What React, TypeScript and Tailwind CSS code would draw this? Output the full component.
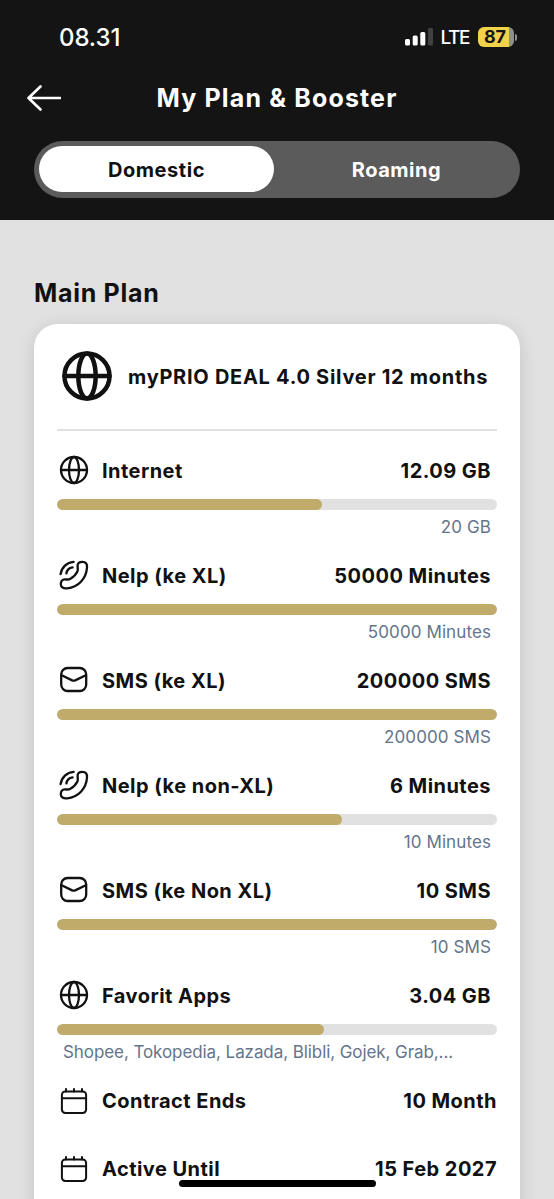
import type { ReactNode } from "react";

type IconName = "globe" | "call" | "mail" | "calendar";

interface Quota {
  icon: IconName;
  label: string;
  value: string;
  total?: string;
  apps?: string;
  pct: number;
}

const QUOTAS: Quota[] = [
  { icon: "globe", label: "Internet", value: "12.09 GB", total: "20 GB", pct: 60.3 },
  { icon: "call", label: "Nelp (ke XL)", value: "50000 Minutes", total: "50000 Minutes", pct: 100 },
  { icon: "mail", label: "SMS (ke XL)", value: "200000 SMS", total: "200000 SMS", pct: 100 },
  { icon: "call", label: "Nelp (ke non-XL)", value: "6 Minutes", total: "10 Minutes", pct: 64.8 },
  { icon: "mail", label: "SMS (ke Non XL)", value: "10 SMS", total: "10 SMS", pct: 100 },
  {
    icon: "globe",
    label: "Favorit Apps",
    value: "3.04 GB",
    apps: "Shopee, Tokopedia, Lazada, Blibli, Gojek, Grab,...",
    pct: 60.7,
  },
];

const DATES = [
  { label: "Contract Ends", value: "10 Month" },
  { label: "Active Until", value: "15 Feb 2027" },
];

const ICON_PATHS: Record<IconName, ReactNode> = {
  globe: (
    <>
      <circle cx="15" cy="15" r="13" />
      <ellipse cx="15" cy="15" rx="5" ry="13" />
      <path d="M2 15h26" />
    </>
  ),
  call: (
    <>
      <path d="M18.6 6.6C18.2 3.2 20.4 1.8 23.4 1.8C26.8 1.8 28.3 3.8 28 7.6C27.2 18.6 19.2 27.4 8.2 28.3C4.2 28.7 1.9 27.4 1.8 24.2C1.7 21.2 3.2 19.4 5.8 19.4C8 19.4 9.4 20 11.4 18.8C14.4 17.2 17 14.6 18.4 11.6C19.2 9.8 18.8 8.4 18.6 6.6Z" />
      <path d="M1.6 14.2C2.6 7.4 7.8 2.4 14.6 1.8" />
      <path d="M7.4 13.4C7.8 10.4 10.2 8 13.6 7.4" />
    </>
  ),
  mail: (
    <>
      <rect x="2.2" y="3" width="25" height="23" rx="6.4" />
      <path d="M2.6 10.2L13.2 15.4Q14.7 16 16.2 15.4L26.8 10.2" />
    </>
  ),
  calendar: (
    <>
      <rect x="2.9" y="5.4" width="24.2" height="21.6" rx="3.4" />
      <path d="M2.9 12.2h24.2M7 3V5.4M15 3V5.4M23 3V5.4" />
    </>
  ),
};

function Icon({ name, className, stroke = 2.3 }: { name: IconName; className: string; stroke?: number }) {
  return (
    <svg viewBox="0 0 30 30" fill="none" stroke="#111" strokeWidth={stroke} strokeLinecap="round" strokeLinejoin="round" className={className}>
      {ICON_PATHS[name]}
    </svg>
  );
}

function StatusBar() {
  return (
    <div className="flex h-[74px] items-center justify-between pr-[37px] pl-[59px]">
      <span className="pt-[2px] text-[24px] leading-none font-medium tracking-[-0.1px]">08.31</span>
      <div className="flex items-center">
        <svg viewBox="0 0 28 18" className="h-[18px] w-7" fill="#fff">
          <rect x="0" y="11" width="5" height="6.5" rx="1.5" />
          <rect x="7.7" y="7.5" width="5" height="10" rx="1.5" />
          <rect x="15.3" y="4" width="5" height="13.5" rx="1.5" />
          <rect x="23" y="0" width="5" height="17.5" rx="1.5" fill="#414141" />
        </svg>
        <span className="ml-[7px] pt-px text-[19px] leading-none font-medium tracking-[-1.4px]">LTE</span>
        <div className="ml-[9px] flex items-center">
          <div className="flex h-5 w-9 items-center justify-center rounded-[6px] bg-linear-to-r from-[#f3d24b] from-86% to-[#8e8e8e] to-86% pr-[2px] text-[18px] leading-none font-bold text-[#141414]">
            87
          </div>
          <div className="ml-px h-[7px] w-[2px] rounded-r-full bg-[#8e8e8e]" />
        </div>
      </div>
    </div>
  );
}

function QuotaRow({ icon, label, value, total, apps, pct }: Quota) {
  return (
    <div className="h-[105px]">
      <div className="flex h-[42px] items-center justify-between pr-[6px]">
        <div className="flex items-center gap-[13px] pl-[2px]">
          <Icon name={icon} className="mb-[2px] size-[30px]" />
          <span>{label}</span>
        </div>
        <span>{value}</span>
      </div>
      <div className="mt-[7px] h-[11px] overflow-hidden rounded-full bg-[#e1e1e1]">
        <div className="h-full rounded-full bg-[#c1ab6b]" style={{ width: `${pct}%` }} />
      </div>
      <div className="flex h-[35px] items-center px-[6px] text-[17px] font-normal tracking-[0.1px] text-[#64748b]">
        {apps ? <span className="tracking-[-0.08px] whitespace-nowrap">{apps}</span> : <span className="ml-auto">{total}</span>}
      </div>
    </div>
  );
}

export default function App() {
  return (
    <div className="relative h-[1199px] w-[554px] overflow-hidden bg-[#e1e1e1] font-['Inter','Liberation_Sans',sans-serif] text-[#111]">
      <header className="h-[220px] bg-[#141414] text-white">
        <StatusBar />
        <div className="grid h-12 grid-cols-[64px_1fr_64px] items-center pr-[27px] pl-[27px]">
          <svg viewBox="0 0 34 26" className="h-[26px] w-[34px]" fill="none" stroke="#fff" strokeWidth="2.6" strokeLinecap="round" strokeLinejoin="round">
            <path d="M13.5 1.5L1.5 13L13.5 24.5M1.5 13H33" />
          </svg>
          <h1 className="justify-self-center text-[25px] leading-none font-bold tracking-[1.15px] whitespace-nowrap">My Plan &amp; Booster</h1>
        </div>
        <div className="mx-[34px] mt-[19px] flex h-[57px] rounded-full bg-[#5b5b5b] p-[5px] text-[20px] font-bold tracking-[0.55px]">
          <button className="h-[46px] w-[235px] rounded-full bg-white pt-px text-[#111]">Domestic</button>
          <button className="h-[46px] flex-1 pt-px pl-1">Roaming</button>
        </div>
      </header>

      <main className="px-[34px] pt-[57px]">
        <h2 className="h-[47px] text-[25px] leading-8 font-bold tracking-[0.7px]">Main Plan</h2>
        <section className="h-[900px] rounded-t-[24px] bg-white px-[23px] text-[20px] font-bold tracking-[0.46px] shadow-[0_3px_18px_rgba(0,0,0,0.13)]">
          <div className="flex h-[107px] items-center gap-[15px] border-b-2 border-[#e1e1e1] pl-1">
            <Icon name="globe" className="mb-[2px] size-[52px]" stroke={2.6} />
            <span className="tracking-[0.72px] whitespace-nowrap">myPRIO DEAL 4.0 Silver 12 months</span>
          </div>
          <div className="pt-[19px]">
            {QUOTAS.map((q) => (
              <QuotaRow key={q.label} {...q} />
            ))}
          </div>
          {DATES.map((d) => (
            <div key={d.label} className="flex h-[68px] items-start justify-between">
              <div className="flex h-[42px] items-center gap-[13px] pl-[2px]">
                <Icon name="calendar" className="size-[30px]" stroke={2} />
                <span>{d.label}</span>
              </div>
              <span className="leading-[42px]">{d.value}</span>
            </div>
          ))}
        </section>
      </main>

      {/* home indicator */}
      <div className="absolute top-[1180px] left-[179px] h-[7px] w-[197px] rounded-full bg-black" />
    </div>
  );
}
